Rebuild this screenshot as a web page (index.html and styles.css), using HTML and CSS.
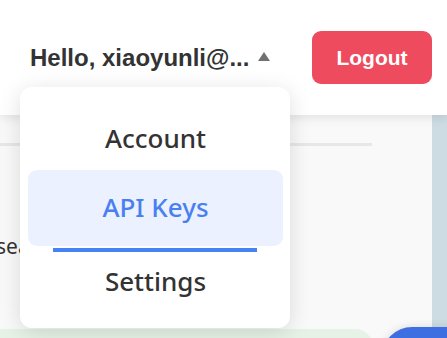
FILE: index.html
```html
<!DOCTYPE html>
<html lang="en">
<head>
<meta charset="utf-8">
<title>Header menu</title>
<link rel="stylesheet" href="styles.css">
</head>
<body>
<div class="page">
  <header class="topbar">
    <div class="user">
      <span class="user-name">Hello, xiaoyunli@...</span>
      <svg class="caret" width="12" height="9" viewBox="0 0 12 9"><polygon points="6,0 12,9 0,9" fill="#707070"/></svg>
    </div>
    <button class="logout">Logout</button>
  </header>
  <div class="body-row">
    <main class="content">
      <div class="rule"></div>
      <p class="copy">search</p>
      <div class="panel"></div>
    </main>
    <aside class="strip"></aside>
  </div>
  <div class="fab"></div>
  <nav class="menu">
    <a class="menu-item item-account">Account</a>
    <a class="menu-item item-active">API Keys</a>
    <div class="menu-bar"></div>
    <a class="menu-item item-settings">Settings</a>
  </nav>
</div>
</body>
</html>
```

FILE: styles.css
```css
html, body {
  margin: 0;
  padding: 0;
  width: 447px;
  height: 338px;
  overflow: hidden;
  background: #ffffff;
}

.page {
  position: relative;
  width: 447px;
  height: 338px;
  overflow: hidden;
}

.topbar {
  position: relative;
  z-index: 2;
  height: 115px;
  display: flex;
  align-items: center;
  padding: 0 15px 0 30px;
  box-sizing: border-box;
  background: #ffffff;
  box-shadow: 0 3px 10px rgba(0, 0, 0, 0.09);
}

.user {
  display: flex;
  align-items: center;
  gap: 9px;
}

.user-name {
  font-family: "Liberation Sans", Arial, sans-serif;
  font-weight: 700;
  font-size: 24px;
  color: #333333;
  white-space: nowrap;
}

.caret {
  display: block;
  margin-top: -3px;
}

.logout {
  margin-left: auto;
  width: 120px;
  height: 53px;
  border: none;
  border-radius: 9px;
  background: #ee4b5e;
  color: #ffffff;
  font-family: "Liberation Sans", Arial, sans-serif;
  font-weight: 700;
  font-size: 21px;
  padding: 0;
}

.body-row {
  display: flex;
  height: 223px;
}

.content {
  flex: 1;
  background: #f9f9f9;
  padding-top: 28px;
  position: relative;
}

.rule {
  width: 372px;
  height: 3px;
  background: #e7e7e7;
}

.copy {
  margin: 86px 0 0 -4px;
  font-family: "Noto Sans", sans-serif;
  font-size: 21px;
  color: #333333;
  white-space: nowrap;
  line-height: 28px;
}

.panel {
  margin-top: 69px;
  width: 372px;
  height: 40px;
  background: #e6f2e5;
  border-radius: 0 16px 0 0;
}

.strip {
  width: 15px;
  background: #cddbe2;
}

.fab {
  position: absolute;
  left: 382px;
  top: 327px;
  width: 120px;
  height: 60px;
  border-radius: 30px;
  background: #3e6fe2;
  box-shadow: 0 0 10px rgba(0, 0, 0, 0.12);
}

.menu {
  position: absolute;
  z-index: 3;
  left: 20px;
  top: 87px;
  width: 270px;
  height: 241px;
  box-sizing: border-box;
  padding: 13px 7px 0 8px;
  background: #ffffff;
  border-radius: 12px;
  box-shadow: 0 4px 22px rgba(0, 0, 0, 0.13);
  display: flex;
  flex-direction: column;
}

.menu-item {
  display: block;
  text-align: center;
  font-family: "Noto Sans", sans-serif;
  font-weight: 500;
  font-size: 26px;
  line-height: 35px;
  color: #333333;
  text-decoration: none;
  border-radius: 9px;
}

.item-account {
  padding: 21px 0 14px;
}

.item-active {
  padding: 20px 0 21px;
  background: #ebf1fe;
  color: #4a7ff1;
}

.menu-bar {
  align-self: center;
  width: 204px;
  height: 4px;
  margin-top: 2px;
  margin-right: 1px;
  background: #4582f6;
}

.item-settings {
  padding: 12px 0 16px;
}
```
